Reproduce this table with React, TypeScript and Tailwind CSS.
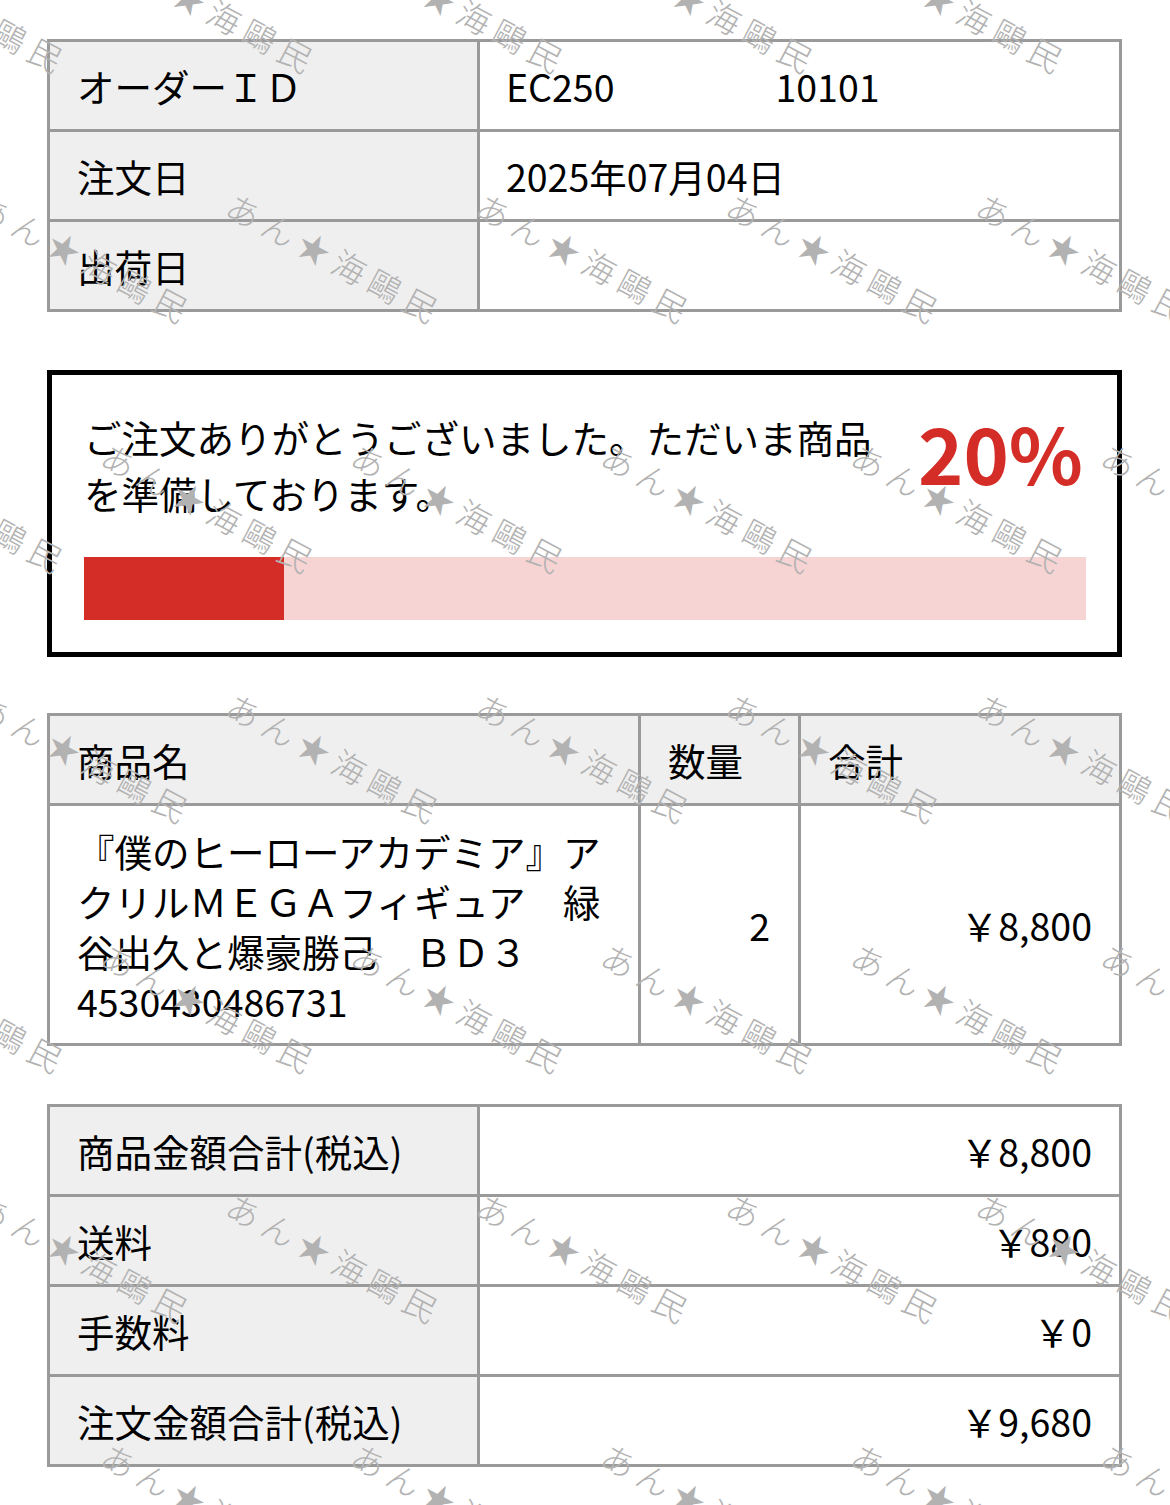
import React from "react";

const labelCell =
  "h-[87px] flex items-center px-[27px] bg-[#efefef] text-[37.5px] text-black leading-none";
const valueCell =
  "h-[87px] flex items-center px-[26px] bg-white text-[37.5px] text-black leading-none";
const valueRight =
  "h-[87px] flex items-center justify-end pr-[27px] bg-white text-[37.5px] text-black leading-none";

function Watermarks() {
  const items: { x: number; y: number }[] = [];
  const rows = [-62, 188, 438, 688, 938, 1188, 1438];
  rows.forEach((y, j) => {
    const off = j % 2 === 0 ? 112 : 237;
    for (let x = off - 500; x < 1200; x += 250) {
      items.push({ x, y });
    }
  });
  return (
    <div className="pointer-events-none absolute inset-0 z-10 overflow-hidden">
      {items.map((p, i) => (
        <span
          key={i}
          className="absolute origin-top-left rotate-[28deg] whitespace-nowrap text-[33px] leading-none font-light tracking-[7px] text-[#b2b2b2]"
          style={{ left: p.x, top: p.y }}
        >
          あん★海鷗民
        </span>
      ))}
    </div>
  );
}

export default function App() {
  return (
    <div className="relative w-[1170px] h-[1505px] overflow-hidden bg-white font-['Noto_Sans_CJK_JP','Noto_Sans',sans-serif] text-black">
      <div className="flex flex-col pl-[47px] pr-[48px] pt-[39px]">
        {/* Order info */}
        <div className="grid grid-cols-[427px_1fr] gap-[3px] bg-[#9a9a9a] border-[3px] border-[#9a9a9a]">
          <div className={labelCell}>オーダーＩＤ</div>
          <div className={valueCell}>
            <span>EC250</span>
            <span className="ml-[161px]">10101</span>
          </div>
          <div className={labelCell}>注文日</div>
          <div className={valueCell}>2025年07月04日</div>
          <div className={labelCell}>出荷日</div>
          <div className={valueCell}></div>
        </div>

        {/* Progress box */}
        <div className="mt-[58px] border-[5px] border-black bg-white pl-[32px] pr-[31px] pt-[34px] pb-[32px]">
          <div className="flex items-start">
            <p className="w-[810px] text-[37.5px] leading-[56px] text-black">
              ご注文ありがとうございました。ただいま商品を準備しております。
            </p>
            <div className="ml-auto mt-[4px] mr-[3px] text-[77px] font-bold leading-none text-[#d42d27]">
              20%
            </div>
          </div>
          <div className="mt-[36px] h-[63px] w-full bg-[#f6d4d4]">
            <div className="h-full bg-[#d42d27]" style={{ width: "20%" }} />
          </div>
        </div>

        {/* Items */}
        <div className="mt-[56px] grid grid-cols-[588px_157px_1fr] gap-[3px] bg-[#9a9a9a] border-[3px] border-[#9a9a9a]">
          <div className={labelCell}>商品名</div>
          <div className={labelCell}>数量</div>
          <div className={labelCell}>合計</div>
          <div className="bg-white pl-[27px] pr-[20px] pt-[20px] pb-[17px] text-[37.5px] leading-[50px]">
            『僕のヒーローアカデミア』アクリルＭＥＧＡフィギュア　緑谷出久と爆豪勝己　ＢＤ３
            <br />
            4530430486731
          </div>
          <div className="flex items-center justify-end bg-white pr-[28px] text-[37.5px] leading-none">
            2
          </div>
          <div className="flex items-center justify-end bg-white pr-[27px] text-[37.5px] leading-none">
            ￥8,800
          </div>
        </div>

        {/* Totals */}
        <div className="mt-[58px] grid grid-cols-[427px_1fr] gap-[3px] bg-[#9a9a9a] border-[3px] border-[#9a9a9a]">
          <div className={labelCell}>商品金額合計(税込)</div>
          <div className={valueRight}>￥8,800</div>
          <div className={labelCell}>送料</div>
          <div className={valueRight}>￥880</div>
          <div className={labelCell}>手数料</div>
          <div className={valueRight}>￥0</div>
          <div className={labelCell}>注文金額合計(税込)</div>
          <div className={valueRight}>￥9,680</div>
        </div>
      </div>
      <Watermarks />
    </div>
  );
}
